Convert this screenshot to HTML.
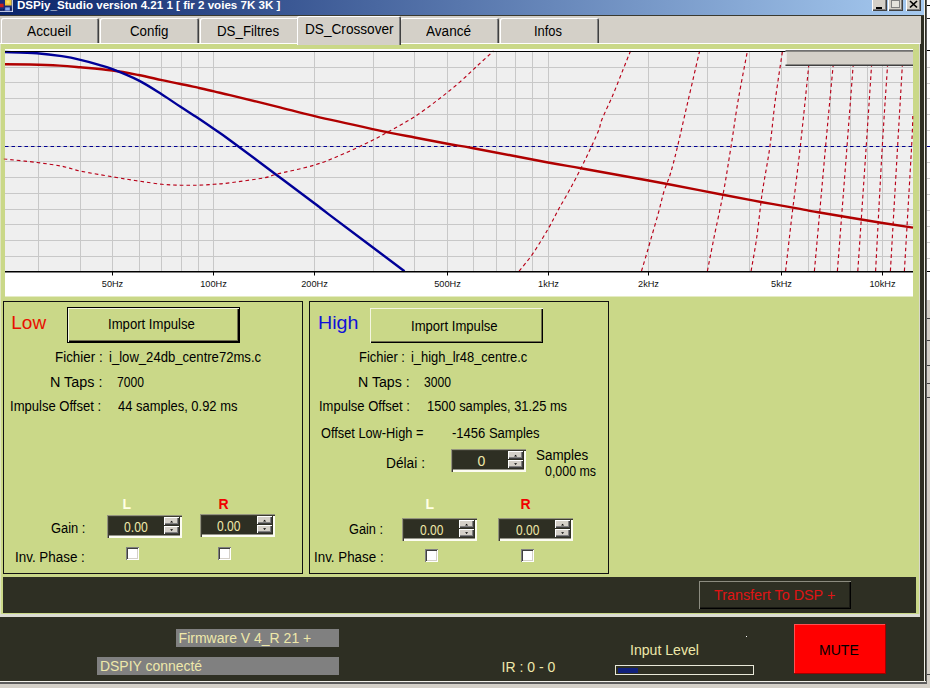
<!DOCTYPE html>
<html lang="fr">
<head>
<meta charset="utf-8">
<title>DSPiy_Studio version 4.21 1 [ fir 2 voies 7K 3K ]</title>
<style>
html,body{margin:0;padding:0;}
body{width:930px;height:688px;overflow:hidden;background:#2e2f23;position:relative;font-family:"Liberation Sans",Arial,sans-serif;font-size:13px;}
#app{position:absolute;left:0;top:0;width:930px;height:688px;overflow:hidden;}
#app div{position:absolute;}
.t{position:absolute;white-space:nowrap;line-height:normal;transform-origin:0 0;}
</style>
</head>
<body>
<div id="app">
<div style="left:0px;top:0px;width:925px;height:15px;background:linear-gradient(90deg,#0a246a 0%,#a6caf0 100%);"></div>
<div style="left:0px;top:14.5px;width:925px;height:1px;background:#3a3a30;"></div>
<span class="t" style="left:16.60px;top:-1.40px;font-size:11.3px;color:#fff;font-weight:bold;transform:scaleX(1.0260);">DSPiy_Studio version 4.21 1 [ fir 2 voies 7K 3K ]</span>
<div style="left:0px;top:0px;width:13px;height:12px;"><svg width="13" height="12" viewBox="0 0 13 12" style="position:absolute;left:0;top:0"><rect x="0" y="0" width="13" height="12" fill="#1a2a78"/><rect x="5" y="0" width="6.6" height="5.5" fill="#f0c838"/><rect x="6.5" y="0.5" width="3" height="3" fill="#f8e070"/><rect x="0" y="3.7" width="3.6" height="3.6" fill="#c82020"/><rect x="5.2" y="7.4" width="4.6" height="3.1" fill="#88a8f0"/><path d="M0 11.4H13M12.4 0V12" stroke="#e8ecf8" stroke-width="0.9" fill="none"/><path d="M0 10H2.5M3.5 9V10.5M11 7.5V10.5" stroke="#0a1440" stroke-width="0.8" fill="none"/></svg></div>
<div style="left:872.2px;top:-3px;width:15.2px;height:14.3px;background:#d4d0c8;box-shadow:inset 1px 1px 0 #fff,inset -1px -1px 0 #404040,inset -2px -2px 0 #808080;"><div style="left:4px;top:10px;width:6px;height:2px;background:#000"></div></div>
<div style="left:888.2px;top:-3px;width:15.2px;height:14.3px;background:#d4d0c8;box-shadow:inset 1px 1px 0 #fff,inset -1px -1px 0 #404040,inset -2px -2px 0 #808080;"><div style="left:3px;top:2px;width:9px;height:9px;box-sizing:border-box;border:1px solid #808080;border-top:2px solid #808080;background:#e4e2dc"></div></div>
<div style="left:906.2px;top:-3px;width:15.2px;height:14.3px;background:#d4d0c8;box-shadow:inset 1px 1px 0 #fff,inset -1px -1px 0 #404040,inset -2px -2px 0 #808080;"><svg width="15" height="14" viewBox="0 0 15 14" style="position:absolute;left:0;top:0"><path d="M4 4L11 10.5M11 4L4 10.5" stroke="#000" stroke-width="1.7"/></svg></div>
<div style="left:0px;top:15.5px;width:921px;height:28px;background:#d4d0c8;"></div>
<div style="left:921px;top:15.5px;width:3.3px;height:666px;background:#2e2f23;"></div>
<div style="left:923.9px;top:0px;width:1.6px;height:682.3px;background:#f0efe8;"></div>
<div style="left:925.5px;top:0px;width:1.4px;height:683.7px;background:#5c5c5c;"></div>
<div style="left:926.9px;top:0px;width:3.1px;height:300px;background:#fff;"></div>
<div style="left:926.9px;top:300px;width:3.1px;height:388px;background:#d4d0c8;"></div>
<div style="left:927px;top:5px;width:3px;height:1px;background:#000;"></div>
<div style="left:927px;top:18px;width:3px;height:1px;background:#222;"></div>
<div style="left:927px;top:50px;width:3px;height:1px;background:#000;"></div>
<div style="left:927px;top:66.7px;width:3px;height:1px;background:#ccc;"></div>
<div style="left:927px;top:82.5px;width:3px;height:1px;background:#ccc;"></div>
<div style="left:927px;top:98px;width:3px;height:1px;background:#ccc;"></div>
<div style="left:927px;top:114px;width:3px;height:1px;background:#ccc;"></div>
<div style="left:927px;top:130px;width:3px;height:1px;background:#ccc;"></div>
<div style="left:927px;top:146px;width:3px;height:1px;background:#000090;"></div>
<div style="left:927px;top:162px;width:3px;height:1px;background:#ccc;"></div>
<div style="left:927px;top:178px;width:3px;height:1px;background:#ccc;"></div>
<div style="left:927px;top:194px;width:3px;height:1px;background:#ccc;"></div>
<div style="left:927px;top:210px;width:3px;height:1px;background:#ccc;"></div>
<div style="left:927px;top:226px;width:3px;height:1px;background:#ccc;"></div>
<div style="left:927px;top:242px;width:3px;height:1px;background:#ccc;"></div>
<div style="left:927px;top:258px;width:3px;height:1px;background:#ccc;"></div>
<div style="left:927px;top:271px;width:3px;height:1px;background:#000;"></div>
<div style="left:927px;top:318px;width:3px;height:1px;background:#404040;"></div>
<div style="left:927px;top:340px;width:3px;height:1px;background:#404040;"></div>
<div style="left:927px;top:365px;width:3px;height:1px;background:#404040;"></div>
<div style="left:927px;top:383px;width:3px;height:1px;background:#404040;"></div>
<div style="left:927px;top:397px;width:3px;height:1px;background:#404040;"></div>
<div style="left:927px;top:674px;width:3px;height:1px;background:#404040;"></div>
<div style="left:1px;top:17.7px;width:98px;height:25.3px;background:#d4d0c8;border-radius:2px 2px 0 0;box-shadow:inset 1px 1px 0 #fff,inset -1px 0 0 #404040,inset -2px 0 0 #808080;"></div>
<span class="t" style="left:26.90px;top:22.60px;font-size:14px;color:#000;transform:scaleX(0.9796);">Accueil</span>
<div style="left:99.5px;top:17.7px;width:99.5px;height:25.3px;background:#d4d0c8;border-radius:2px 2px 0 0;box-shadow:inset 1px 1px 0 #fff,inset -1px 0 0 #404040,inset -2px 0 0 #808080;"></div>
<span class="t" style="left:130.00px;top:22.60px;font-size:14px;color:#000;transform:scaleX(0.9500);">Config</span>
<div style="left:199.5px;top:17.7px;width:99.5px;height:25.3px;background:#d4d0c8;border-radius:2px 2px 0 0;box-shadow:inset 1px 1px 0 #fff,inset -1px 0 0 #404040,inset -2px 0 0 #808080;"></div>
<span class="t" style="left:217.25px;top:22.60px;font-size:14px;color:#000;transform:scaleX(0.9511);">DS_Filtres</span>
<div style="left:399.5px;top:17.7px;width:99.5px;height:25.3px;background:#d4d0c8;border-radius:2px 2px 0 0;box-shadow:inset 1px 1px 0 #fff,inset -1px 0 0 #404040,inset -2px 0 0 #808080;"></div>
<span class="t" style="left:426.10px;top:22.60px;font-size:14px;color:#000;transform:scaleX(0.9688);">Avancé</span>
<div style="left:499.5px;top:17.7px;width:99.0px;height:25.3px;background:#d4d0c8;border-radius:2px 2px 0 0;box-shadow:inset 1px 1px 0 #fff,inset -1px 0 0 #404040,inset -2px 0 0 #808080;"></div>
<span class="t" style="left:534.38px;top:22.60px;font-size:14px;color:#000;transform:scaleX(0.9233);">Infos</span>
<div style="left:0px;top:43px;width:919.5px;height:573.5px;background:#cad888;"></div>
<div style="left:0px;top:43px;width:919.5px;height:1.3px;background:#fff;"></div>
<div style="left:0px;top:44px;width:1px;height:570px;background:#dfe4c0;"></div>
<div style="left:919px;top:44px;width:1.2px;height:572px;background:#d8d8cc;"></div>
<div style="left:0px;top:614.3px;width:920.2px;height:2.3px;background:#dcdcd4;"></div>
<div style="left:297px;top:16px;width:104.30000000000001px;height:29px;background:#d4d0c8;border-radius:2px 2px 0 0;box-shadow:inset 1px 1px 0 #fff,inset -1px 0 0 #404040,inset -2px 0 0 #808080;"></div>
<span class="t" style="left:304.73px;top:21.00px;font-size:14px;color:#000;transform:scaleX(0.9738);">DS_Crossover</span>
<div style="left:0px;top:616.6px;width:921px;height:64px;background:#2e2f23;"></div>
<div style="left:0px;top:683.7px;width:930px;height:4.3px;background:#d4d0c8;"></div>
<div style="left:0px;top:680.7px;width:925.5px;height:1.6px;background:#f0efe8;"></div>
<div style="left:0px;top:682.3px;width:926.9px;height:1.4px;background:#5c5c5c;"></div>
<svg class="chart" width="930" height="300" viewBox="0 0 930 300" style="position:absolute;left:0;top:0">
<rect x="5" y="49" width="908" height="247.5" fill="#ffffff"/>
<rect x="5" y="51" width="908" height="220.5" fill="#efefef"/>
<path d="M5 67.5H913M5 82.5H913M5 98.5H913M5 114.5H913M5 130.5H913M5 146.5H913M5 161.5H913M5 177.5H913M5 193.5H913M5 209.5H913M5 224.5H913M5 240.5H913M5 256.5H913M38.5 51V271.5M80.5 51V271.5M112.5 51V271.5M139.5 51V271.5M161.5 51V271.5M181.5 51V271.5M198.5 51V271.5M213.5 51V271.5M314.5 51V271.5M373.5 51V271.5M414.5 51V271.5M447.5 51V271.5M473.5 51V271.5M496.5 51V271.5M515.5 51V271.5M532.5 51V271.5M548.5 51V271.5M648.5 51V271.5M707.5 51V271.5M749.5 51V271.5M781.5 51V271.5M808.5 51V271.5M830.5 51V271.5M850.5 51V271.5M867.5 51V271.5M882.5 51V271.5" stroke="#c8c8c8" stroke-width="1" fill="none" shape-rendering="crispEdges"/>
<g fill="none" stroke="#b80018" stroke-width="1.15" stroke-dasharray="3.6 3">
<path d="M5.0 159.0C5.4 159.1 2.1 158.7 7.4 159.3C12.7 159.9 27.9 161.3 37.0 162.5C46.1 163.7 54.6 164.8 61.8 166.2C69.0 167.6 72.0 169.3 80.4 171.1C88.9 172.9 102.8 175.2 112.5 176.8C122.2 178.5 130.2 179.8 138.5 181.0C146.8 182.2 155.0 183.6 162.0 184.3C169.0 185.0 174.5 185.0 180.5 185.2C186.5 185.3 192.4 185.3 198.0 185.2C203.6 185.0 208.7 184.7 214.0 184.3C219.3 183.9 221.6 183.9 230.0 182.8C238.4 181.7 256.7 179.2 264.5 177.8C272.3 176.4 268.5 176.2 276.9 174.1C285.3 172.0 303.6 168.4 314.7 165.0C325.8 161.6 334.0 157.9 343.7 153.8C353.4 149.7 364.4 144.3 372.6 140.2C380.8 136.1 386.1 133.0 393.1 129.1C400.1 125.2 406.9 121.8 414.7 116.7C422.5 111.6 432.5 104.0 440.0 98.2C447.5 92.4 453.6 87.5 459.8 82.1C466.0 76.7 471.5 71.2 477.1 66.0C482.7 60.8 490.8 53.5 493.5 51.0"/>
<path d="M519.1 271.0C521.4 268.1 528.0 260.7 532.8 253.7C537.6 246.7 543.8 236.3 548.1 228.9C552.4 221.5 554.5 216.8 558.7 209.1C563.0 201.4 569.0 191.2 573.6 182.5C578.2 173.8 582.4 165.6 586.5 157.0C590.6 148.4 595.7 137.5 598.3 131.2C600.9 124.9 599.5 125.3 602.0 119.2C604.5 113.1 609.6 102.8 613.1 94.5C616.6 86.2 620.1 77.0 623.0 69.7C625.9 62.5 629.2 54.1 630.5 51.0"/>
<path d="M641.5 271.0C642.5 267.6 644.8 260.2 647.6 250.5C650.4 240.8 655.8 222.2 658.5 212.5C661.2 202.8 661.9 198.2 663.8 192.0C665.7 185.8 667.8 182.2 670.0 175.0C672.2 167.8 674.0 161.1 677.0 148.7C680.0 136.3 684.3 116.9 688.1 100.6C691.9 84.3 697.7 59.3 699.6 51.0"/>
<path d="M707.4 271.0C708.5 265.4 711.4 250.6 714.0 237.6C716.6 224.6 720.5 207.8 723.3 193.0C726.1 178.2 728.2 164.1 730.7 148.7C733.2 133.3 735.3 116.9 738.1 100.6C740.9 84.3 745.9 59.3 747.4 51.0"/>
<path d="M751.1 271.0C752.0 265.4 754.9 250.6 756.7 237.6C758.6 224.6 760.1 207.8 762.2 193.0C764.4 178.2 767.4 164.1 769.6 148.7C771.8 133.3 773.1 116.9 775.2 100.6C777.4 84.3 781.3 59.3 782.5 51.0"/>
<path d="M785.6 271.0C786.5 263.0 788.7 243.6 791.1 222.8C793.5 202.0 797.4 172.5 800.3 146.4C803.2 120.3 807.1 81.9 808.7 66.0C810.4 50.1 810.0 53.5 810.2 51.0"/>
<path d="M814.4 271.0C816.3 250.2 822.5 180.6 825.6 146.4C828.7 112.2 831.6 81.9 833.1 66.0C834.6 50.1 834.3 53.5 834.5 51.0"/>
<path d="M837.4 271.0C839.0 250.2 844.4 180.6 847.0 146.4C849.6 112.2 851.9 81.9 853.1 66.0C854.3 50.1 854.0 53.5 854.2 51.0"/>
<path d="M857.8 271.0C859.2 250.2 863.9 180.6 866.2 146.4C868.5 112.2 870.5 81.9 871.5 66.0C872.5 50.1 872.3 53.5 872.5 51.0"/>
<path d="M875.6 271.0C876.7 250.2 880.3 180.6 882.3 146.4C884.3 112.2 886.5 81.9 887.5 66.0C888.5 50.1 888.2 53.5 888.4 51.0"/>
<path d="M890.4 271.0C891.6 250.2 895.6 180.6 897.6 146.4C899.6 112.2 901.4 81.9 902.3 66.0C903.2 50.1 903.1 53.5 903.2 51.0"/>
<path d="M904.4 271.0C905.6 250.2 910.2 172.4 911.6 146.4C913.0 120.4 912.6 120.2 912.8 115.0"/>
</g>
<path d="M5 146.5H913" stroke="#000090" stroke-width="1.2" stroke-dasharray="3.5 3" fill="none"/>
<path d="M5.0 64.3C9.2 64.3 20.9 64.3 30.0 64.5C39.1 64.7 51.0 65.1 59.4 65.6C67.8 66.1 71.6 66.5 80.4 67.3C89.2 68.1 102.8 69.2 112.5 70.5C122.2 71.8 130.2 73.4 138.5 75.0C146.8 76.6 155.0 78.7 162.0 80.2C169.0 81.7 174.5 82.8 180.5 84.0C186.5 85.2 192.3 86.5 197.9 87.7C203.5 88.9 208.7 90.0 214.0 91.3C219.3 92.5 219.5 92.7 230.0 95.2C240.5 97.8 262.8 103.1 276.9 106.6C291.0 110.1 298.8 112.5 314.7 116.2C330.6 120.0 355.9 125.5 372.6 129.1C389.3 132.7 401.8 135.0 414.7 137.5C427.6 140.0 440.2 142.5 450.0 144.3C459.8 146.1 457.1 145.2 473.4 148.2C489.7 151.2 529.9 159.1 548.0 162.5C566.1 165.9 565.5 165.5 582.2 168.5C599.0 171.5 633.9 177.8 648.5 180.5C663.1 183.2 657.8 182.2 670.0 184.5C682.2 186.8 706.1 191.6 721.5 194.5C736.9 197.4 749.1 199.8 762.2 202.2C775.3 204.6 790.7 207.2 800.0 208.9C809.3 210.6 804.5 210.0 818.0 212.3C831.5 214.6 865.2 220.1 881.0 222.7C896.8 225.2 907.7 226.8 913.0 227.6" stroke="#b00000" stroke-width="2.4" fill="none"/>
<path d="M5.0 52.0C10.3 52.2 27.5 52.5 37.0 53.2C46.5 53.9 54.6 55.0 61.8 56.1C69.0 57.2 74.2 58.3 80.4 59.8C86.6 61.2 93.7 63.2 99.0 64.8C104.3 66.4 105.9 66.6 112.5 69.2C119.1 71.8 130.2 76.2 138.5 80.4C146.8 84.6 155.0 90.1 162.0 94.5C169.0 98.9 174.5 102.9 180.5 106.8C186.5 110.7 192.3 114.3 197.9 118.0C203.5 121.7 208.7 125.3 214.0 129.0C219.3 132.7 219.5 132.5 230.0 140.2C240.5 147.9 262.8 164.6 276.9 175.2C291.0 185.8 306.0 197.0 314.7 203.5C323.4 210.0 313.8 203.1 328.8 214.4C343.8 225.7 391.9 261.7 404.5 271.2" stroke="#000098" stroke-width="2.4" fill="none"/>
<path d="M5 51.5H913" stroke="#000" stroke-width="1" fill="none"/>
<path d="M5 271.8H913" stroke="#000" stroke-width="1.5" fill="none"/>
<path d="M112.5 271.5V275.5M213.5 271.5V275.5M314.5 271.5V275.5M447.5 271.5V275.5M548.5 271.5V275.5M648.5 271.5V275.5M781.5 271.5V275.5M882.5 271.5V275.5" stroke="#000" stroke-width="1" fill="none"/>
<g font-family="Liberation Sans, Arial, sans-serif" font-size="9.2" fill="#111" text-anchor="middle">
<text x="112.5" y="286.7">50Hz</text>
<text x="213.5" y="286.7">100Hz</text>
<text x="314.5" y="286.7">200Hz</text>
<text x="447.5" y="286.7">500Hz</text>
<text x="548.5" y="286.7">1kHz</text>
<text x="648.5" y="286.7">2kHz</text>
<text x="781.5" y="286.7">5kHz</text>
<text x="882.5" y="286.7">10kHz</text>
</g>
<rect x="785.5" y="51" width="127.5" height="15" fill="#d4d0c8"/>
<path d="M785.5 50.9H913" stroke="#404040" stroke-width="1.2"/>
<path d="M786 52V65" stroke="#ffffff" stroke-width="1"/>
<path d="M785.5 65.2H913" stroke="#404040" stroke-width="1.6"/>
</svg>
<div style="left:3px;top:301px;width:300px;height:273px;box-sizing:border-box;border:1px solid #111;"></div>
<div style="left:309px;top:301px;width:300px;height:273px;box-sizing:border-box;border:1px solid #111;"></div>
<div style="left:3px;top:577px;width:913px;height:36.2px;background:#2e2f23;"></div>
<span class="t" style="left:11.30px;top:312.10px;font-size:19px;color:#e81000;">Low</span>
<div style="left:67px;top:306.6px;width:172.9px;height:36px;box-sizing:border-box;background:#cad888;border:1px solid #000;box-shadow:inset 1px 1px 0 #f4f6e0,inset -1px -1px 0 #000,inset -2px -2px 0 #707050;"></div>
<span class="t" style="left:108.26px;top:315.90px;font-size:14px;color:#000;transform:scaleX(0.9379);">Import Impulse</span>
<span class="t" style="left:55.34px;top:348.60px;font-size:14px;color:#000;transform:scaleX(0.9562);">Fichier :</span>
<span class="t" style="left:50.37px;top:373.80px;font-size:14px;color:#000;transform:scaleX(1.0250);">N Taps :</span>
<span class="t" style="left:10.37px;top:397.80px;font-size:14px;color:#000;transform:scaleX(0.9323);">Impulse Offset :</span>
<span class="t" style="left:108.50px;top:348.60px;font-size:14px;color:#000;transform:scaleX(0.9351);">i_low_24db_centre72ms.c</span>
<span class="t" style="left:116.80px;top:373.80px;font-size:14px;color:#000;transform:scaleX(0.8674);">7000</span>
<span class="t" style="left:118.00px;top:397.80px;font-size:14px;color:#000;transform:scaleX(0.9243);">44 samples, 0.92 ms</span>
<span class="t" style="left:122.50px;top:496.20px;font-size:14px;color:#ffffe4;font-weight:bold;">L</span>
<span class="t" style="left:218.40px;top:496.20px;font-size:14px;color:#f00000;font-weight:bold;">R</span>
<span class="t" style="left:51.40px;top:520.00px;font-size:14px;color:#000;transform:scaleX(0.9215);">Gain :</span>
<div style="left:106.7px;top:515.1px;width:75.2px;height:22.8px;box-sizing:border-box;background:#2e2f23;box-shadow:inset 1px 1px 0 #94947e,inset 2px 2px 0 #3c3c30,inset -2px -2.4px 0 #fcfcf2;"></div>
<div style="left:164.0px;top:516.9px;width:15.2px;height:8.1px;background:#d4d0c8;box-shadow:inset 1px 1px 0 #fff,inset -1px -1px 0 #404040,inset -2px -2px 0 #808080;"><svg width="16" height="8.1" viewBox="0 0 16 8.1" style="position:absolute;left:0;top:0"><path d="M6.1 5.4L7.6 3.7L9.1 5.4Z" fill="#000"/></svg></div>
<div style="left:164.0px;top:525.6px;width:15.2px;height:8.1px;background:#d4d0c8;box-shadow:inset 1px 1px 0 #fff,inset -1px -1px 0 #404040,inset -2px -2px 0 #808080;"><svg width="16" height="8.1" viewBox="0 0 16 8.1" style="position:absolute;left:0;top:0"><path d="M6.1 3.3L7.6 5.0L9.1 3.3Z" fill="#000"/></svg></div>
<span class="t" style="left:124.30px;top:518.60px;font-size:14px;color:#eee8aa;transform:scaleX(0.8703);">0.00</span>
<div style="left:199.7px;top:514.1px;width:75.2px;height:22.8px;box-sizing:border-box;background:#2e2f23;box-shadow:inset 1px 1px 0 #94947e,inset 2px 2px 0 #3c3c30,inset -2px -2.4px 0 #fcfcf2;"></div>
<div style="left:257.0px;top:515.9px;width:15.2px;height:8.1px;background:#d4d0c8;box-shadow:inset 1px 1px 0 #fff,inset -1px -1px 0 #404040,inset -2px -2px 0 #808080;"><svg width="16" height="8.1" viewBox="0 0 16 8.1" style="position:absolute;left:0;top:0"><path d="M6.1 5.4L7.6 3.7L9.1 5.4Z" fill="#000"/></svg></div>
<div style="left:257.0px;top:524.6px;width:15.2px;height:8.1px;background:#d4d0c8;box-shadow:inset 1px 1px 0 #fff,inset -1px -1px 0 #404040,inset -2px -2px 0 #808080;"><svg width="16" height="8.1" viewBox="0 0 16 8.1" style="position:absolute;left:0;top:0"><path d="M6.1 3.3L7.6 5.0L9.1 3.3Z" fill="#000"/></svg></div>
<span class="t" style="left:217.30px;top:517.60px;font-size:14px;color:#eee8aa;transform:scaleX(0.8630);">0.00</span>
<span class="t" style="left:15.04px;top:548.70px;font-size:14px;color:#000;transform:scaleX(0.9577);">Inv. Phase :</span>
<div style="left:126px;top:547px;width:13px;height:13px;box-sizing:border-box;background:#fff;box-shadow:inset 1px 1px 0 #808080,inset -1px -1px 0 #fff,inset 2px 2px 0 #404040,inset -2px -2px 0 #d4d0c8;"></div>
<div style="left:218px;top:547px;width:13px;height:13px;box-sizing:border-box;background:#fff;box-shadow:inset 1px 1px 0 #808080,inset -1px -1px 0 #fff,inset 2px 2px 0 #404040,inset -2px -2px 0 #d4d0c8;"></div>
<span class="t" style="left:317.87px;top:312.00px;font-size:19px;color:#1010d8;transform:scaleX(1.0344);">High</span>
<div style="left:370.3px;top:308.2px;width:172.5px;height:35px;box-sizing:border-box;background:#cad888;box-shadow:inset 1px 1px 0 #f4f6e0,inset -1px -1px 0 #000,inset -2px -2px 0 #707050;"></div>
<span class="t" style="left:411.36px;top:317.80px;font-size:14px;color:#000;transform:scaleX(0.9357);">Import Impulse</span>
<span class="t" style="left:358.58px;top:348.60px;font-size:14px;color:#000;transform:scaleX(0.9228);">Fichier :</span>
<span class="t" style="left:358.49px;top:373.80px;font-size:14px;color:#000;transform:scaleX(1.0109);">N Taps :</span>
<span class="t" style="left:319.47px;top:397.80px;font-size:14px;color:#000;transform:scaleX(0.9292);">Impulse Offset :</span>
<span class="t" style="left:411.40px;top:348.60px;font-size:14px;color:#000;transform:scaleX(0.9224);">i_high_lr48_centre.c</span>
<span class="t" style="left:424.40px;top:373.80px;font-size:14px;color:#000;transform:scaleX(0.8674);">3000</span>
<span class="t" style="left:427.48px;top:397.80px;font-size:14px;color:#000;transform:scaleX(0.9180);">1500 samples, 31.25 ms</span>
<span class="t" style="left:320.60px;top:424.60px;font-size:14px;color:#000;transform:scaleX(0.9124);">Offset Low-High =</span>
<span class="t" style="left:452.00px;top:424.60px;font-size:14px;color:#000;transform:scaleX(0.9303);">-1456 Samples</span>
<span class="t" style="left:386.42px;top:455.40px;font-size:14px;color:#000;transform:scaleX(0.9817);">Délai :</span>
<div style="left:450.8px;top:449.1px;width:75.2px;height:22.8px;box-sizing:border-box;background:#2e2f23;box-shadow:inset 1px 1px 0 #94947e,inset 2px 2px 0 #3c3c30,inset -2px -2.4px 0 #fcfcf2;"></div>
<div style="left:508.1px;top:450.90000000000003px;width:15.2px;height:8.1px;background:#d4d0c8;box-shadow:inset 1px 1px 0 #fff,inset -1px -1px 0 #404040,inset -2px -2px 0 #808080;"><svg width="16" height="8.1" viewBox="0 0 16 8.1" style="position:absolute;left:0;top:0"><path d="M6.1 5.4L7.6 3.7L9.1 5.4Z" fill="#000"/></svg></div>
<div style="left:508.1px;top:459.6px;width:15.2px;height:8.1px;background:#d4d0c8;box-shadow:inset 1px 1px 0 #fff,inset -1px -1px 0 #404040,inset -2px -2px 0 #808080;"><svg width="16" height="8.1" viewBox="0 0 16 8.1" style="position:absolute;left:0;top:0"><path d="M6.1 3.3L7.6 5.0L9.1 3.3Z" fill="#000"/></svg></div>
<span class="t" style="left:477.40px;top:452.80px;font-size:14px;color:#eee8aa;">0</span>
<span class="t" style="left:535.80px;top:446.70px;font-size:14px;color:#000;transform:scaleX(0.9583);">Samples</span>
<span class="t" style="left:544.50px;top:462.60px;font-size:14px;color:#000;transform:scaleX(0.8856);">0,000 ms</span>
<span class="t" style="left:425.50px;top:495.80px;font-size:14px;color:#ffffe4;font-weight:bold;">L</span>
<span class="t" style="left:520.40px;top:495.80px;font-size:14px;color:#f00000;font-weight:bold;">R</span>
<span class="t" style="left:349.40px;top:520.90px;font-size:14px;color:#000;transform:scaleX(0.9105);">Gain :</span>
<div style="left:401.8px;top:518px;width:75.2px;height:22.8px;box-sizing:border-box;background:#2e2f23;box-shadow:inset 1px 1px 0 #94947e,inset 2px 2px 0 #3c3c30,inset -2px -2.4px 0 #fcfcf2;"></div>
<div style="left:459.1px;top:519.8px;width:15.2px;height:8.1px;background:#d4d0c8;box-shadow:inset 1px 1px 0 #fff,inset -1px -1px 0 #404040,inset -2px -2px 0 #808080;"><svg width="16" height="8.1" viewBox="0 0 16 8.1" style="position:absolute;left:0;top:0"><path d="M6.1 5.4L7.6 3.7L9.1 5.4Z" fill="#000"/></svg></div>
<div style="left:459.1px;top:528.5px;width:15.2px;height:8.1px;background:#d4d0c8;box-shadow:inset 1px 1px 0 #fff,inset -1px -1px 0 #404040,inset -2px -2px 0 #808080;"><svg width="16" height="8.1" viewBox="0 0 16 8.1" style="position:absolute;left:0;top:0"><path d="M6.1 3.3L7.6 5.0L9.1 3.3Z" fill="#000"/></svg></div>
<span class="t" style="left:419.70px;top:521.60px;font-size:14px;color:#eee8aa;transform:scaleX(0.8557);">0.00</span>
<div style="left:497.5px;top:518px;width:75.2px;height:22.8px;box-sizing:border-box;background:#2e2f23;box-shadow:inset 1px 1px 0 #94947e,inset 2px 2px 0 #3c3c30,inset -2px -2.4px 0 #fcfcf2;"></div>
<div style="left:554.8px;top:519.8px;width:15.2px;height:8.1px;background:#d4d0c8;box-shadow:inset 1px 1px 0 #fff,inset -1px -1px 0 #404040,inset -2px -2px 0 #808080;"><svg width="16" height="8.1" viewBox="0 0 16 8.1" style="position:absolute;left:0;top:0"><path d="M6.1 5.4L7.6 3.7L9.1 5.4Z" fill="#000"/></svg></div>
<div style="left:554.8px;top:528.5px;width:15.2px;height:8.1px;background:#d4d0c8;box-shadow:inset 1px 1px 0 #fff,inset -1px -1px 0 #404040,inset -2px -2px 0 #808080;"><svg width="16" height="8.1" viewBox="0 0 16 8.1" style="position:absolute;left:0;top:0"><path d="M6.1 3.3L7.6 5.0L9.1 3.3Z" fill="#000"/></svg></div>
<span class="t" style="left:515.50px;top:521.60px;font-size:14px;color:#eee8aa;transform:scaleX(0.8557);">0.00</span>
<span class="t" style="left:313.85px;top:549.00px;font-size:14px;color:#000;transform:scaleX(0.9549);">Inv. Phase :</span>
<div style="left:425px;top:548.7px;width:13px;height:13px;box-sizing:border-box;background:#fff;box-shadow:inset 1px 1px 0 #808080,inset -1px -1px 0 #fff,inset 2px 2px 0 #404040,inset -2px -2px 0 #d4d0c8;"></div>
<div style="left:520.5px;top:548.7px;width:13px;height:13px;box-sizing:border-box;background:#fff;box-shadow:inset 1px 1px 0 #808080,inset -1px -1px 0 #fff,inset 2px 2px 0 #404040,inset -2px -2px 0 #d4d0c8;"></div>
<div style="left:698.8px;top:581px;width:152.5px;height:27.5px;box-sizing:border-box;background:#2e2f23;box-shadow:inset 1px 1px 0 #8c8c80,inset -1px -1px 0 #000,inset -2px -2px 0 #1a1a14;"></div>
<span class="t" style="left:714.40px;top:586.80px;font-size:14px;color:#e01414;transform:scaleX(1.0241);">Transfert To DSP +</span>
<div style="left:175.8px;top:629.2px;width:163.2px;height:17.5px;background:#808080;"></div>
<span class="t" style="left:178.60px;top:629.90px;font-size:14px;color:#eee8aa;">Firmware V 4_R 21 +</span>
<div style="left:97.2px;top:657.2px;width:241.8px;height:17.5px;background:#808080;"></div>
<span class="t" style="left:99.50px;top:657.80px;font-size:14px;color:#eee8aa;transform:scaleX(0.9957);">DSPIY connecté</span>
<span class="t" style="left:501.60px;top:658.60px;font-size:14px;color:#eee8aa;">IR : 0 - 0</span>
<span class="t" style="left:629.59px;top:642.10px;font-size:14px;color:#eee8aa;transform:scaleX(1.0061);">Input Level</span>
<div style="left:615px;top:665px;width:139px;height:10px;box-sizing:border-box;border:1px solid #e8e8d8;background:#2e2f23;"><div style="left:2px;top:1.5px;width:19.5px;height:5.5px;background:#10207c"></div></div>
<div style="left:746px;top:635.5px;width:1.2px;height:1.2px;background:#fff;"></div>
<div style="left:794.2px;top:624px;width:92.3px;height:50.3px;background:#ff0000;box-shadow:inset -1px -1px 0 #a00000,inset 1px 1px 0 #ff5050;"></div>
<span class="t" style="left:819.30px;top:641.70px;font-size:14px;color:#000;transform:scaleX(1.0046);">MUTE</span>
</div>
</body>
</html>
